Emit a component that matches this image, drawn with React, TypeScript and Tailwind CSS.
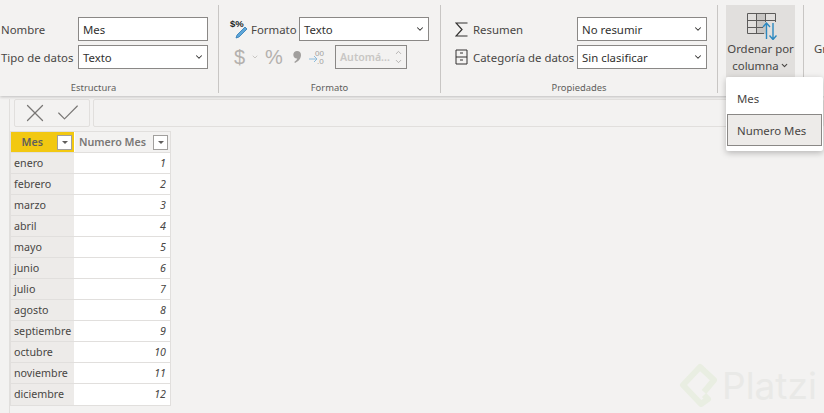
import React from 'react';
import { ChevronDown, ChevronUp, Check, X } from 'lucide-react';

const meses = ['enero', 'febrero', 'marzo', 'abril', 'mayo', 'junio', 'julio', 'agosto', 'septiembre', 'octubre', 'noviembre', 'diciembre'];

const Field: React.FC<{ value: string; chevron?: boolean }> = ({ value, chevron = true }) => (
  <div className="w-[130px] h-6 bg-white border border-[#8a8886] flex items-center justify-between pl-[4px] pr-[3px] text-[#323130]">
    <span className="pt-[2px]">{value}</span>
    {chevron && <ChevronDown size={10} strokeWidth={2.5} className="text-[#323130]" />}
  </div>
);

const GroupLabel: React.FC<{ children: React.ReactNode; className?: string }> = ({ children, className = 'right-0' }) => (
  <div className={`absolute bottom-0 left-0 ${className} text-center text-[9.4px] leading-[10px] text-[#605e5c]`}>{children}</div>
);

const FormatIcon = () => (
  <svg width="18" height="20" viewBox="0 0 18 20" className="shrink-0">
    <text x="1" y="8" fontSize="9.5" fontWeight="700" fill="#201f1e" fontFamily="'Liberation Sans', sans-serif">$%</text>
    <path d="M16 8 L18 10 L10 18 L7 19 L8 16 Z" fill="#5ea6d8" stroke="#2b79b5" strokeWidth="0.8" />
  </svg>
);

const SortIcon = () => (
  <svg width="30" height="28" viewBox="0 0 30 28">
    <rect x="10" y="1" width="9" height="21" fill="#c8c6c4" />
    <path d="M0.5 1.5H28.5V10M0.5 1.5V21.5H17M0.5 8.5H28M0.5 15.5H16M9.5 1.5V21M18.5 1.5V10" fill="none" stroke="#5c5b5a" strokeWidth="1" />
    <path d="M19.5 27V11.5M16 15L19.5 11L23 15" fill="none" stroke="#2b88c0" strokeWidth="1.4" />
    <path d="M26 11V27M22.5 23.5L26 27.5L29.5 23.5" fill="none" stroke="#2b88c0" strokeWidth="1.4" />
  </svg>
);

const FilterButton = () => (
  <div className="w-[15px] h-[15px] bg-white border border-[#a19f9d] flex items-center justify-center shrink-0">
    <div className="w-0 h-0 border-l-[3px] border-r-[3px] border-t-[3px] border-l-transparent border-r-transparent border-t-[#605e5c]" />
  </div>
);

export default function App() {
  return (
    <div className="relative w-[824px] h-[413px] overflow-hidden bg-[#f3f2f1] text-[11.4px] font-['Noto_Sans',sans-serif]">
      {/* Ribbon */}
      <div className="h-[96px] flex pt-[5px] pb-[3px] bg-[#f3f2f1] shadow-[0_1px_3px_rgba(0,0,0,0.22)] text-[#484644]">
        <div className="relative w-[219px] shrink-0 border-r border-[#c8c6c4] pt-3 pl-px">
          <div className="flex items-center h-6">
            <span className="w-[77px] pt-[2px]">Nombre</span>
            <Field value="Mes" chevron={false} />
          </div>
          <div className="flex items-center h-6 mt-1">
            <span className="w-[77px] pt-[2px]">Tipo de datos</span>
            <Field value="Texto" />
          </div>
          <GroupLabel className="right-[31px]">Estructura</GroupLabel>
        </div>

        <div className="relative w-[222px] shrink-0 border-r border-[#c8c6c4] pt-3 pl-[10px]">
          <div className="flex items-center h-6">
            <FormatIcon />
            <span className="ml-1 w-[48px] pt-[2px]">Formato</span>
            <Field value="Texto" />
          </div>
          <div className="flex items-center h-6 mt-1 text-[#b3b0ad]">
            <span className="ml-[5px] w-[11px] text-[20px] leading-none font-['Liberation_Sans',sans-serif]">$</span>
            <ChevronDown size={8} className="ml-[6px]" />
            <span className="ml-[6px] w-[18px] text-[20px] leading-none font-['Liberation_Sans',sans-serif]">%</span>
            <svg width="8" height="12" viewBox="0 0 8 12" className="ml-[10px] shrink-0">
              <path d="M4 0C6.5 0 8 1.6 8 4C8 7.5 5.5 10.5 2 12L1.3 11C3 9.8 4 8.8 4.3 7.6C2 7.8 0.3 6.2 0.3 3.8C0.3 1.6 2 0 4 0Z" fill="#a19f9d" />
            </svg>
            <svg width="17" height="16" viewBox="0 0 17 16" className="ml-[8px] shrink-0">
              <path d="M0 10H8M5 7L8 10L5 13" fill="none" stroke="#8cbcdc" strokeWidth="1" />
              <text x="6" y="7" fontSize="8" fill="#a19f9d" fontFamily="'Liberation Sans', sans-serif">00</text>
              <text x="8" y="15" fontSize="8" fill="#a19f9d" fontFamily="'Liberation Sans', sans-serif">.0</text>
            </svg>
            <div className="ml-[9px] w-[72px] h-6 border border-[#8a8886] flex items-center justify-between pl-[4px] pr-[3px] text-[10.6px] text-[#c8c6c4] font-semibold shrink-0">
              <span className="pt-[2px] whitespace-nowrap">Automá...</span>
              <span className="flex flex-col text-[#a19f9d]">
                <ChevronUp size={9} />
                <ChevronDown size={9} />
              </span>
            </div>
          </div>
          <GroupLabel>Formato</GroupLabel>
        </div>

        <div className="relative w-[277px] shrink-0 border-r border-[#c8c6c4] pt-3 pl-[14px]">
          <div className="flex items-center h-6">
            <svg width="13" height="15" viewBox="0 0 13 15" className="shrink-0">
              <path d="M12.5 1H1L7 7.5L1 14H12.5" fill="none" stroke="#323130" strokeWidth="1.2" />
            </svg>
            <span className="ml-[5px] w-[104px] pt-[2px]">Resumen</span>
            <Field value="No resumir" />
          </div>
          <div className="flex items-center h-6 mt-1">
            <svg width="13" height="16" viewBox="0 0 13 16" className="shrink-0">
              <path d="M1 1H12V15H1ZM1 8H12M5 4H8M5 11H8" fill="none" stroke="#323130" strokeWidth="1" />
            </svg>
            <span className="ml-[5px] w-[104px] pt-[2px] whitespace-nowrap">Categoría de datos</span>
            <Field value="Sin clasificar" />
          </div>
          <GroupLabel>Propiedades</GroupLabel>
        </div>

        <div className="w-[86px] shrink-0 border-r border-[#c8c6c4] pl-2">
          <div className="w-[69px] h-[72px] bg-[#e1dfdd] flex flex-col items-center pt-[7px] leading-[17px] text-center">
            <div className="h-[28px] pl-[2px]">
              <SortIcon />
            </div>
            <span className="whitespace-nowrap">Ordenar por</span>
            <span className="flex items-center whitespace-nowrap">
              columna
              <ChevronDown size={9} strokeWidth={3} className="ml-px" />
            </span>
          </div>
        </div>

        <div className="pl-[10px] pt-[35px] leading-[17px] text-center whitespace-nowrap">
          Grupos de
          <br />
          datos
        </div>
      </div>

      {/* Area de datos */}
      <div className="ml-[9px] h-[317px] border-l border-[#e1dfdd]">
        <div className="flex h-[28px] mt-[3px] ml-[4px] gap-[3px]">
          <div className="w-[76px] border border-[#e1dfdd] rounded-[2px] flex items-center pl-[5px] gap-[4px] text-[#797775]">
            <X size={30} strokeWidth={1} className="shrink-0" />
            <Check size={28} strokeWidth={1} className="shrink-0" />
          </div>
          <div className="flex-1 border border-[#e1dfdd] rounded-[2px]" />
        </div>

        <div className="w-[161px] mt-[4px] border border-[#e1dfdd] bg-white text-[10.7px]">
          <div className="flex h-[21px] font-semibold border-b border-[#e1dfdd]">
            <div className="w-[63px] bg-[#f2c811] flex items-center justify-end pr-[2px] text-[#605e5c]">
              <span className="mr-[14px]">Mes</span>
              <FilterButton />
            </div>
            <div className="flex-1 ml-px bg-[#f3f2f1] flex items-center justify-between pl-[4px] pr-[2px] text-[#797775]">
              <span>Numero Mes</span>
              <FilterButton />
            </div>
          </div>
          {meses.map((mes, i) => (
            <div key={mes} className="flex h-[21px] border-b border-[#e1dfdd] last:border-b-0 text-[#484644]">
              <div className="w-[63px] bg-[#edebe9] pl-[3px] flex items-center">{mes}</div>
              <div className="flex-1 ml-px flex items-center justify-end pr-[4px] italic">{i + 1}</div>
            </div>
          ))}
        </div>
      </div>

      {/* Menu desplegable */}
      <div className="absolute left-[726px] top-[77px] w-[97px] h-[74px] bg-white rounded-[2px] shadow-[0_2px_6px_rgba(0,0,0,0.25)] pt-[5px] text-[#484644]">
        <div className="h-[32px] pl-[11px] pt-[2px] flex items-center">Mes</div>
        <div className="h-[32px] mx-px pl-[9px] pt-[2px] flex items-center bg-[#edebe9] border border-[#8a8886]">Numero Mes</div>
      </div>

      {/* Marca de agua */}
      <div className="absolute left-[677px] top-[362px] flex items-center gap-[5px] text-[#e9e9e7]">
        <svg width="40" height="46" viewBox="0 0 40 46" className="shrink-0">
          <path d="M27 30L37 18L23 5L6 23L24 42L31 37L27 33" fill="none" stroke="#e9eee2" strokeWidth="6" strokeLinejoin="round" />
        </svg>
        <span className="text-[37px] leading-none font-['Inter',sans-serif]">Platzi</span>
      </div>
    </div>
  );
}
